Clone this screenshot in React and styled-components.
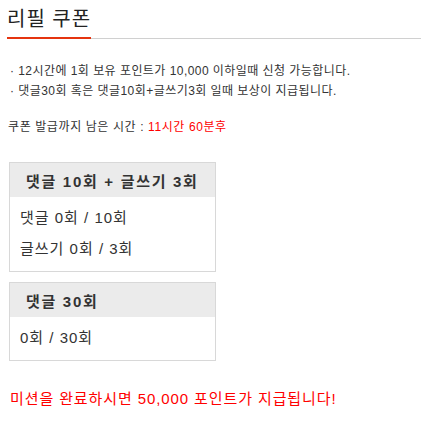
import styled, { createGlobalStyle } from 'styled-components';

const GlobalStyle = createGlobalStyle`
  html, body {
    margin: 0;
    padding: 0;
    background: #fff;
  }
  body {
    font-family: 'Liberation Sans', 'Noto Sans CJK KR', sans-serif;
    color: #333;
  }
`;

const missions = [
  { title: '댓글 10회 + 글쓰기 3회', rows: ['댓글 0회 / 10회', '글쓰기 0회 / 3회'] },
  { title: '댓글 30회', rows: ['0회 / 30회'] },
];

const App = () => {
  return (
    <Page>
      <GlobalStyle />
      <TitleBar>
        <Title>리필 쿠폰</Title>
      </TitleBar>
      <NoticeList>
        <li>· 12시간에 1회 보유 포인트가 10,000 이하일때 신청 가능합니다.</li>
        <li>· 댓글30회 혹은 댓글10회+글쓰기3회 일때 보상이 지급됩니다.</li>
      </NoticeList>
      <Timer>
        쿠폰 발급까지 남은 시간 : <b>11시간 60분후</b>
      </Timer>
      <Missions>
        {missions.map((m) => (
          <MissionBox key={m.title}>
            <MissionHead>{m.title}</MissionHead>
            <MissionBody>
              {m.rows.map((r) => (
                <MissionRow key={r}>{r}</MissionRow>
              ))}
            </MissionBody>
          </MissionBox>
        ))}
      </Missions>
      <Reward>미션을 완료하시면 50,000 포인트가 지급됩니다!</Reward>
    </Page>
  );
};

const Page = styled.div`
  padding: 0 0 0 7px;
`;

const TitleBar = styled.div`
  display: flex;
  border-bottom: 1px solid #d0d0d0;
`;

const Title = styled.h2`
  margin: 0 0 -1px;
  padding: 5px 0 4px;
  font-size: 20px;
  line-height: 28px;
  font-weight: normal;
  letter-spacing: 1px;
  color: #222;
  border-bottom: 2px solid #e5340f;
`;

const NoticeList = styled.ul`
  list-style: none;
  margin: 22px 0 0;
  padding: 0 0 0 3px;
  li {
    font-size: 12px;
    line-height: 20px;
    letter-spacing: 0.45px;
    color: #333;
  }
`;

const Timer = styled.p`
  margin: 16px 0 0;
  padding-left: 1px;
  font-size: 12px;
  line-height: 20px;
  letter-spacing: 0.6px;
  color: #333;
  b {
    font-weight: normal;
    color: #ff0000;
  }
`;

const Missions = styled.div`
  display: flex;
  flex-direction: column;
  gap: 10px;
  margin: 25px 0 0 2px;
`;

const MissionBox = styled.div`
  width: 205px;
  border: 1px solid #d8d8d8;
`;

const MissionHead = styled.div`
  height: 34px;
  padding-left: 16px;
  background: #ebebeb;
  display: flex;
  align-items: center;
  font-size: 15px;
  font-weight: bold;
  letter-spacing: 1.7px;
  color: #333;
`;

const MissionBody = styled.div`
  padding: 5px 0 7px 10px;
`;

const MissionRow = styled.div`
  font-size: 15px;
  line-height: 31px;
  letter-spacing: 1px;
  color: #333;
`;

const Reward = styled.p`
  margin: 28px 0 0;
  padding-left: 3px;
  font-size: 15px;
  line-height: 20px;
  letter-spacing: 0.9px;
  color: #ff0000;
`;

export default App;
